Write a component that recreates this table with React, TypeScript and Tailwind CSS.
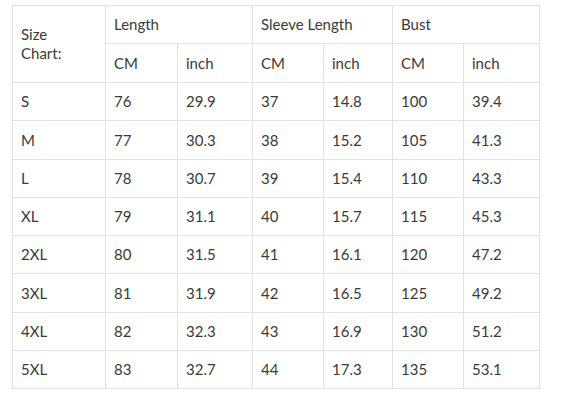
import React from "react";

const rows = [
  ["S", "76", "29.9", "37", "14.8", "100", "39.4"],
  ["M", "77", "30.3", "38", "15.2", "105", "41.3"],
  ["L", "78", "30.7", "39", "15.4", "110", "43.3"],
  ["XL", "79", "31.1", "40", "15.7", "115", "45.3"],
  ["2XL", "80", "31.5", "41", "16.1", "120", "47.2"],
  ["3XL", "81", "31.9", "42", "16.5", "125", "49.2"],
  ["4XL", "82", "32.3", "43", "16.9", "130", "51.2"],
  ["5XL", "83", "32.7", "44", "17.3", "135", "53.1"],
];

const cell = "border border-[#e2e2e2] pl-2 align-middle";

export default function App() {
  return (
    <div className="w-[573px] h-[401px] bg-white pl-3 pt-[5px] font-['Lato',sans-serif] text-[15px] text-[#3a3a3a]">
      <table className="table-fixed border-collapse w-[527px]">
        <colgroup>
          <col className="w-[93px]" />
          <col className="w-[72px]" />
          <col className="w-[75px]" />
          <col className="w-[71px]" />
          <col className="w-[69px]" />
          <col className="w-[71px]" />
          <col className="w-[76px]" />
        </colgroup>
        <thead>
          <tr className="h-[38px]">
            <th rowSpan={2} className={`${cell} font-normal text-left leading-[19px]`}>
              Size
              <br />
              Chart:
            </th>
            <th colSpan={2} className={`${cell} font-normal text-left`}>Length</th>
            <th colSpan={2} className={`${cell} font-normal text-left`}>Sleeve Length</th>
            <th colSpan={2} className={`${cell} font-normal text-left`}>Bust</th>
          </tr>
          <tr className="h-[39px]">
            <th className={`${cell} font-normal text-left`}>CM</th>
            <th className={`${cell} font-normal text-left`}>inch</th>
            <th className={`${cell} font-normal text-left`}>CM</th>
            <th className={`${cell} font-normal text-left`}>inch</th>
            <th className={`${cell} font-normal text-left`}>CM</th>
            <th className={`${cell} font-normal text-left`}>inch</th>
          </tr>
        </thead>
        <tbody>
          {rows.map((r) => (
            <tr key={r[0]} className="h-[38.25px]">
              {r.map((v, i) => (
                <td key={i} className={cell}>
                  {v}
                </td>
              ))}
            </tr>
          ))}
        </tbody>
      </table>
    </div>
  );
}
